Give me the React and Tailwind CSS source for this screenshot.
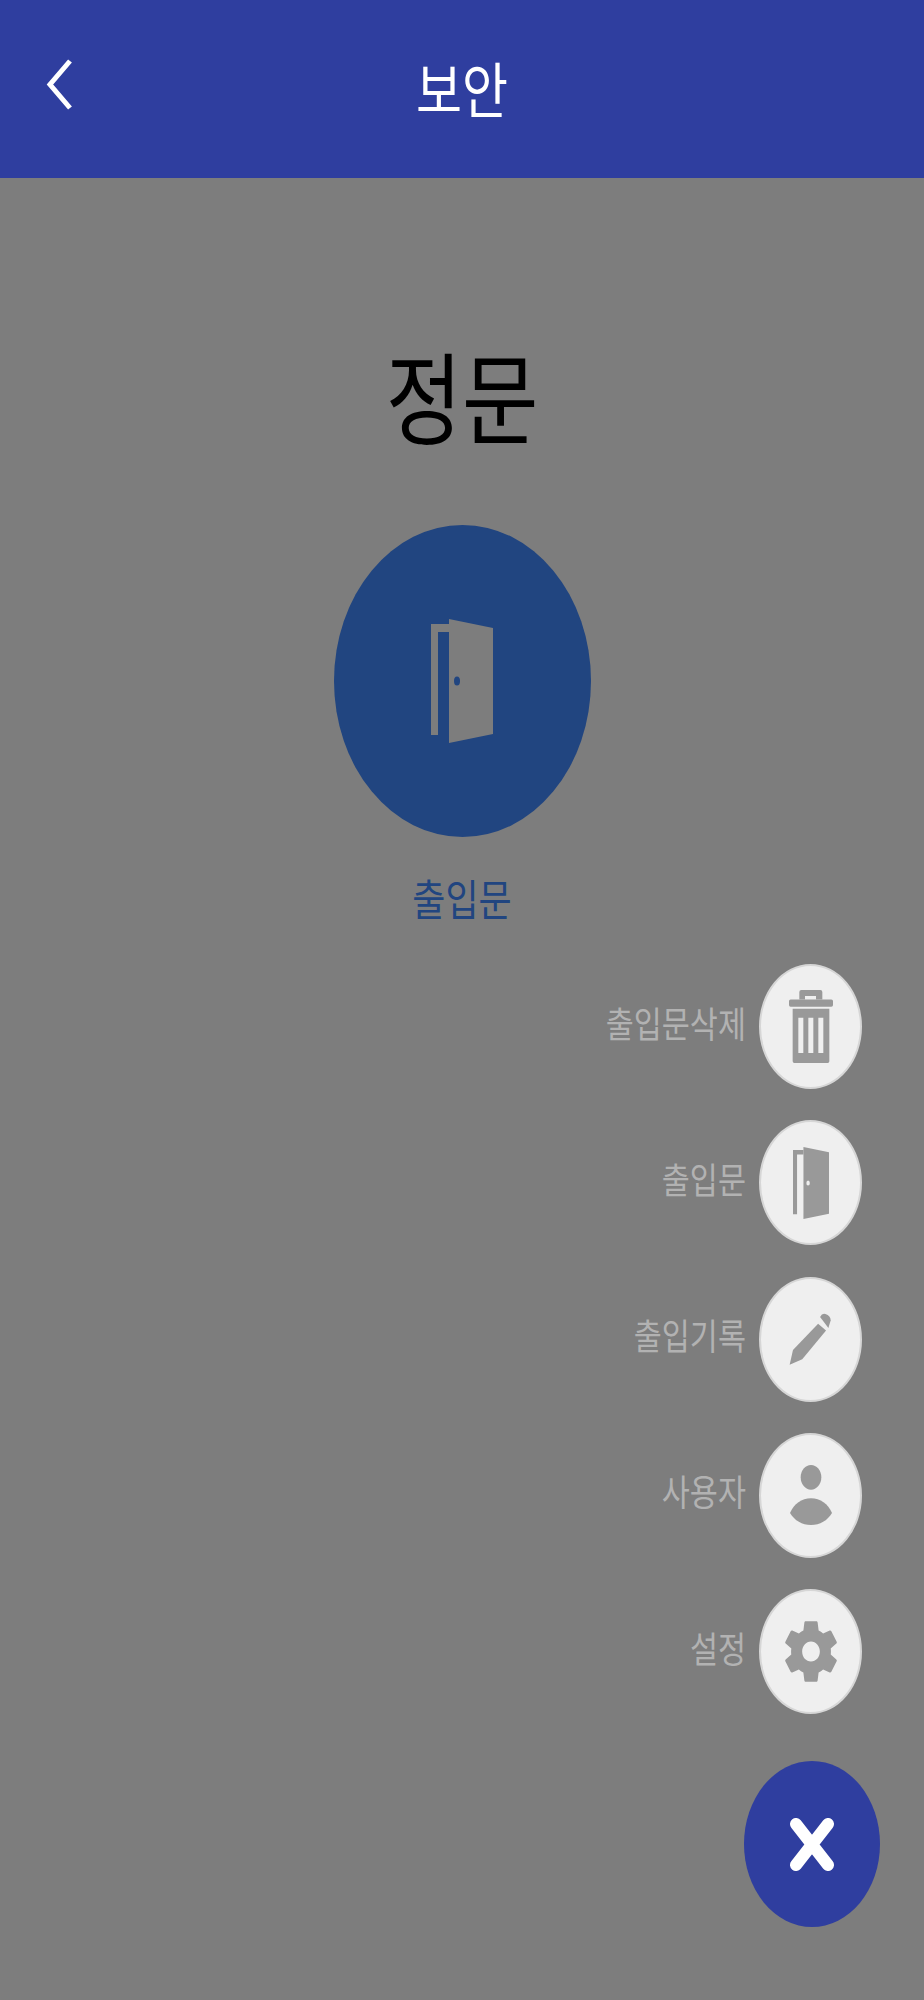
const FONT = "font-['Noto_Sans_CJK_KR','Noto_Sans',sans-serif]";

function Door({ className, color, knob }) {
  return (
    <svg className={className} viewBox="0 0 62 124" preserveAspectRatio="none">
      <path d="M0 5H18V13H7V116H0Z" fill={color} />
      <path d="M18 0L62 9V115L18 124Z" fill={color} />
      <ellipse cx="26" cy="62" rx="3" ry="4.5" fill={knob} />
    </svg>
  );
}

function Trash() {
  return (
    <svg className="w-[44px] h-[73px]" viewBox="0 0 132 218" preserveAspectRatio="none">
      <path
        fill="#999999"
        fillRule="evenodd"
        d="M31 6Q31 0 37 0H94Q100 0 100 6V28H81V18H48V28H31Z"
      />
      <rect x="0" y="28" width="132" height="22" rx="5" fill="#999999" />
      <path
        fill="#999999"
        fillRule="evenodd"
        d="M11 56H121V213Q121 218 116 218H16Q11 218 11 213ZM28 83V188H43V83ZM58 83V188H73V83ZM88 83V188H103V83Z"
      />
    </svg>
  );
}

function Pencil() {
  return (
    <svg className="w-[43px] h-[53px]" viewBox="600 160 130 158" preserveAspectRatio="none">
      <path d="M602 314L612 270L688 192L712 212L640 298Z" fill="#999999" />
      <path d="M694 172Q700 160 710 163Q726 168 726 182L719 205Z" fill="#999999" />
    </svg>
  );
}

function User() {
  return (
    <svg className="w-[42px] h-[60px]" viewBox="600 618 126 180" preserveAspectRatio="none">
      <ellipse cx="663" cy="655" rx="31" ry="37" fill="#999999" />
      <path d="M600 762C612 735 635 718 663 718C691 718 714 735 726 762C712 785 690 798 663 798C636 798 614 785 600 762Z" fill="#999999" />
    </svg>
  );
}

function Gear() {
  return (
    <svg className="w-[52px] h-[63px]" viewBox="2.6 2 18.8 20" preserveAspectRatio="none">
      <path
        fill="#999999"
        d="M19.14 12.94c.04-.3.06-.61.06-.94 0-.32-.02-.64-.07-.94l2.03-1.58c.18-.14.23-.41.12-.61l-1.92-3.32c-.12-.22-.37-.29-.59-.22l-2.39.96c-.5-.38-1.03-.7-1.62-.94l-.36-2.54c-.04-.24-.24-.41-.48-.41h-3.84c-.24 0-.43.17-.47.41l-.36 2.54c-.59.24-1.13.57-1.62.94l-2.39-.96c-.22-.08-.47 0-.59.22L2.74 8.87c-.12.21-.08.47.12.61l2.03 1.58c-.05.3-.09.63-.09.94s.02.64.07.94l-2.03 1.58c-.18.14-.23.41-.12.61l1.92 3.32c.12.22.37.29.59.22l2.39-.96c.5.38 1.03.7 1.62.94l.36 2.54c.05.24.24.41.48.41h3.84c.24 0 .44-.17.47-.41l.36-2.54c.59-.24 1.13-.56 1.62-.94l2.39.96c.22.08.47 0 .59-.22l1.92-3.32c.12-.22.07-.47-.12-.61l-2.01-1.58zM12 15.2c-1.77 0-3.2-1.43-3.2-3.2s1.43-3.2 3.2-3.2 3.2 1.43 3.2 3.2-1.43 3.2-3.2 3.2z"
      />
    </svg>
  );
}

function ActionRow({ label, children }) {
  return (
    <div className="flex items-center justify-end gap-[13px]">
      <span className="text-[30.5px] leading-[40px] mb-[10px] text-[#b2b2b2] scale-y-[1.2] whitespace-nowrap">{label}</span>
      <div className="w-[103px] h-[125px] rounded-[50%] bg-[#efefef] border-2 border-[#d6d6d6] flex items-center justify-center">
        {children}
      </div>
    </div>
  );
}

export default function App() {
  return (
    <div className={`${FONT} w-[924px] min-h-[2000px] bg-[#7d7d7d] flex flex-col`}>
      <header className="relative h-[178px] bg-[#2f3e9f] flex items-center justify-center">
        <svg className="absolute left-[45px] top-[58px] w-[30px] h-[54px]" viewBox="0 0 30 54">
          <path d="M25 3L5 26.5L25 50" fill="none" stroke="#ffffff" strokeWidth="5" />
        </svg>
        <h1 className="text-[50px] leading-[60px] text-white scale-y-[1.2] mb-[4px]">보안</h1>
      </header>

      <main className="flex flex-col items-center pt-[170px]">
        <h2 className="h-[100px] text-[83px] leading-[100px] -mt-[4px] mb-[4px] text-black scale-y-[1.2]">정문</h2>
        <div className="mt-[77px] w-[257px] h-[312px] rounded-[50%] bg-[#214580] flex items-center justify-center">
          <Door className="w-[62px] h-[124px]" color="#7d7d7d" knob="#214580" />
        </div>
        <p className="mt-[38px] mb-[2px] h-[44px] text-[36px] leading-[44px] text-[#214580] scale-y-[1.2]">출입문</p>
      </main>

      <section className="mt-[43px] pr-[62px] flex flex-col gap-[31.25px]">
        <ActionRow label="출입문삭제"><Trash /></ActionRow>
        <ActionRow label="출입문">
          <Door className="w-[36px] h-[72px]" color="#999999" knob="#efefef" />
        </ActionRow>
        <ActionRow label="출입기록"><Pencil /></ActionRow>
        <ActionRow label="사용자"><User /></ActionRow>
        <ActionRow label="설정"><Gear /></ActionRow>
      </section>

      <div className="mt-[47px] pr-[44px] flex justify-end">
        <button className="w-[136px] h-[166px] rounded-[50%] bg-[#2f3e9f] flex items-center justify-center">
          <svg className="w-[44px] h-[53px]" viewBox="0 0 44 53">
            <path d="M6 6L38 47M38 6L6 47" fill="none" stroke="#ffffff" strokeWidth="12" strokeLinecap="round" />
          </svg>
        </button>
      </div>
    </div>
  );
}
